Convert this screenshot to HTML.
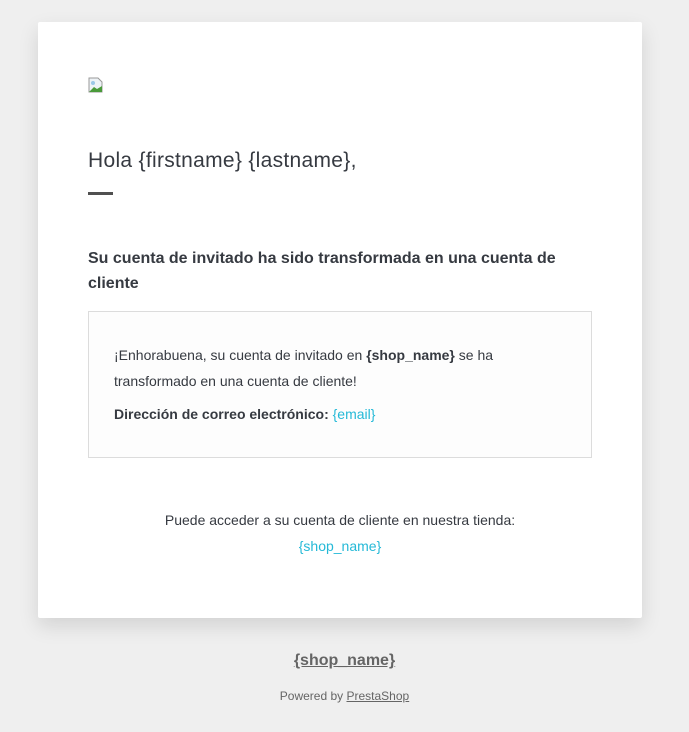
<!DOCTYPE html>
<html><head><meta charset="utf-8"><style>
body{margin:0;background:#efefef;font-family:"Liberation Sans",sans-serif;color:#353943;width:689px;height:732px;overflow:hidden;position:relative}
.card{position:absolute;left:38px;top:22px;width:604px;height:596px;background:#fff;box-shadow:0 8px 20px rgba(0,0,0,.12);border-radius:2px}
.img{position:absolute;left:50px;top:55px}
h1{position:absolute;left:50px;top:127px;margin:0;font-size:21px;letter-spacing:0.3px;font-weight:normal;color:#363a41}
.bar{position:absolute;left:50px;top:170px;width:25px;height:3px;background:#505050}
h2{position:absolute;left:50px;top:224px;margin:0;width:490px;font-size:16px;font-weight:bold;line-height:25px;color:#363a41}
.box{position:absolute;left:50px;top:289px;width:502px;height:145px;border:1px solid #dcdcdc;background:#fdfdfd}
.box p{margin:0;position:absolute;left:25px;width:460px;font-size:14px;line-height:26px;color:#363a41}
a{color:#25b9d7;text-decoration:none}
.foot{position:absolute;left:0;width:604px;top:485px;text-align:center;font-size:14px;line-height:26px;color:#363a41}
.shop{position:absolute;top:652px;left:0;width:689px;text-align:center;font-size:16px;font-weight:bold;color:#656565;text-decoration:underline}
.pw{position:absolute;top:689px;left:0;width:689px;text-align:center;font-size:12px;color:#656565}
.pw span{text-decoration:underline}
</style></head><body>
<div class="card">
<svg class="img" width="16" height="16" viewBox="0 0 16 16"><path d="M1 1h9l4 4v10H1z" fill="#eef3f7" stroke="#999"/><path d="M1 15l5-5 3 2 5-3v6z" fill="#4a9a3a"/><circle cx="5" cy="6" r="2" fill="#9cc8e8"/></svg>
<h1>Hola {firstname} {lastname},</h1>
<div class="bar"></div>
<h2>Su cuenta de invitado ha sido transformada en una cuenta de cliente</h2>
<div class="box">
<p style="top:30px">¡Enhorabuena, su cuenta de invitado en <b>{shop_name}</b> se ha transformado en una cuenta de cliente!</p>
<p style="top:89px"><b>Dirección de correo electrónico:</b> <a>{email}</a></p>
</div>
<div class="foot">Puede acceder a su cuenta de cliente en nuestra tienda:<br><a>{shop_name}</a></div>
</div>
<div class="shop">{shop_name}</div>
<div class="pw">Powered by <span>PrestaShop</span></div>
</body></html>
